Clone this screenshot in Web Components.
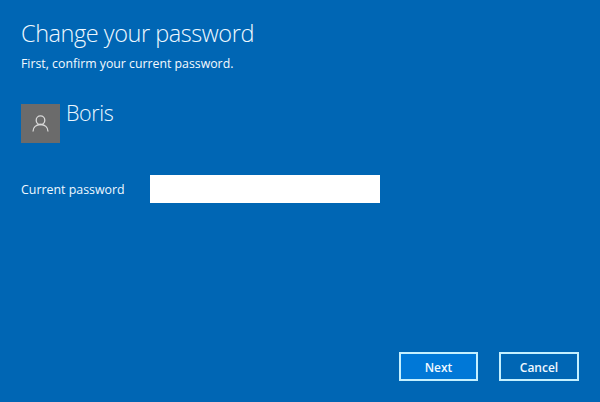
<!DOCTYPE html>
<html lang="en">
<head>
<meta charset="utf-8">
<title>Change your password</title>
<style>
  html, body { margin: 0; height: 100%; background: #0066b4; }
  body { font-family: "Open Sans", "Noto Sans", sans-serif; color: #fff; overflow: hidden; }
</style>
</head>
<body>
<password-dialog>
  <span slot="title">Change your password</span>
  <span slot="subtitle">First, confirm your current password.</span>
  <user-tile name="Boris"></user-tile>
  <password-field label="Current password"></password-field>
  <dialog-button slot="actions" primary>Next</dialog-button>
  <dialog-button slot="actions">Cancel</dialog-button>
</password-dialog>

<script>
class PasswordDialog extends HTMLElement {
    constructor() {
        super();
        this.attachShadow({ mode: 'open' });
    }

    connectedCallback() {
        this.shadowRoot.innerHTML = `
            <style>
                :host { display: flex; flex-direction: column; box-sizing: border-box; height: 402px; padding: 17px 21px 21px; background: #0066b4; }
                h1 { margin: 0; font-size: 23.5px; line-height: 32px; font-weight: 300; letter-spacing: -0.45px; color: #eef8ff; }
                p { margin: 7px 0 0; font-size: 12.3px; line-height: 16px; color: #f4faff; }
                .body { display: flex; flex-direction: column; margin-top: 32px; }
                .actions { display: flex; justify-content: flex-end; gap: 21px; margin-top: auto; }
            </style>
            <h1><slot name="title"></slot></h1>
            <p><slot name="subtitle"></slot></p>
            <div class="body"><slot></slot></div>
            <div class="actions"><slot name="actions"></slot></div>
        `;
    }
}

class UserTile extends HTMLElement {
    constructor() {
        super();
        this.attachShadow({ mode: 'open' });
    }

    connectedCallback() {
        this.shadowRoot.innerHTML = `
            <style>
                :host { display: flex; align-items: flex-start; gap: 6px; }
                .avatar { display: flex; align-items: center; justify-content: center; width: 39px; height: 39px; background: #6b6b6b; }
                .name { font-size: 21.5px; line-height: 28px; margin-top: -5px; font-weight: 300; letter-spacing: -0.4px; color: #eef8ff; }
            </style>
            <div class="avatar">
                <svg width="17" height="17" viewBox="0 0 17 17" fill="none" stroke="#d9d9d9" stroke-width="1.3">
                    <circle cx="8.5" cy="5.2" r="4.3"/>
                    <path d="M1 16.4c0-4.2 3.2-6.9 7.5-6.9s7.5 2.7 7.5 6.9"/>
                </svg>
            </div>
            <div class="name">${this.getAttribute('name')}</div>
        `;
    }
}

class PasswordField extends HTMLElement {
    constructor() {
        super();
        this.attachShadow({ mode: 'open' });
    }

    connectedCallback() {
        this.shadowRoot.innerHTML = `
            <style>
                :host { display: flex; align-items: center; margin-top: 32px; }
                label { width: 129px; font-size: 12.4px; color: #eef8ff; }
                input { box-sizing: border-box; width: 230px; height: 28px; margin: 0; padding: 0 6px; border: 0; border-radius: 0; background: #fff; outline: none; }
            </style>
            <label for="pw">${this.getAttribute('label')}</label>
            <input id="pw" type="password">
        `;
    }
}

class DialogButton extends HTMLElement {
    constructor() {
        super();
        this.attachShadow({ mode: 'open' });
    }

    connectedCallback() {
        this.shadowRoot.innerHTML = `
            <style>
                :host { display: block; }
                button { box-sizing: border-box; display: block; width: 80px; height: 29px; padding: 1px 0 0; border: 2px solid #c4f0ff; border-radius: 0; background: #0066b4; color: #f0f8ff; font: 600 12px "Open Sans", "Noto Sans", sans-serif; }
                :host([primary]) button { width: 79px; background: #0078d7; }
            </style>
            <button type="button"><slot></slot></button>
        `;
    }
}

customElements.define('password-dialog', PasswordDialog);
customElements.define('user-tile', UserTile);
customElements.define('password-field', PasswordField);
customElements.define('dialog-button', DialogButton);
</script>
</body>
</html>
